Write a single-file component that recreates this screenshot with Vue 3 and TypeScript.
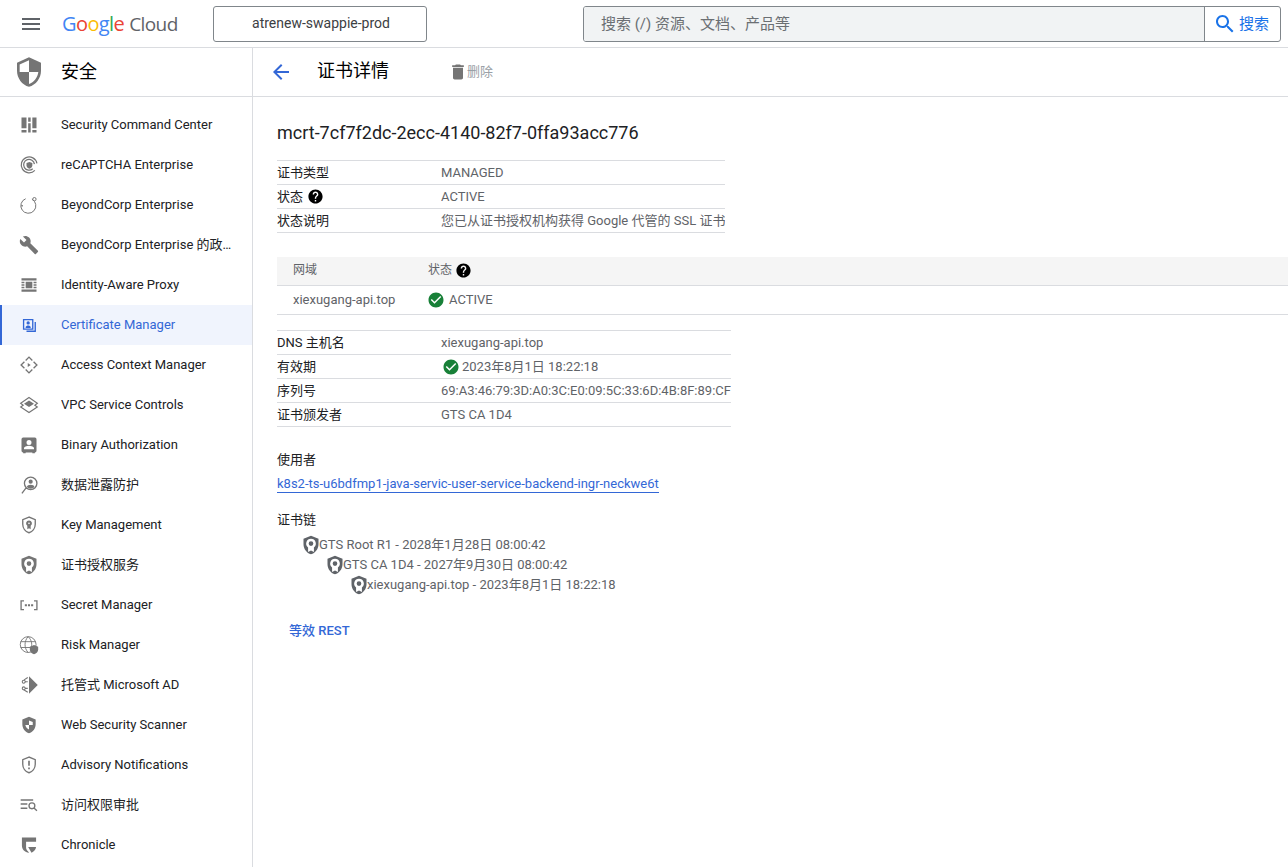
<template>
  <div class="page">
    <header class="topbar">
      <button class="menu-btn" title="菜单">
        <svg width="24" height="24" viewBox="0 0 24 24"><path fill="#5f6368" d="M3 18h18v-2H3v2zm0-5h18v-2H3v2zm0-7v2h18V6H3z" /></svg>
      </button>
      <div class="logo">
        <span class="g-blue">G</span><span class="g-red">o</span><span class="g-yellow">o</span><span class="g-blue">g</span><span class="g-green">l</span><span class="g-red">e</span><span class="logo-cloud">Cloud</span>
      </div>
      <div class="project">atrenew-swappie-prod</div>
      <div class="search">
        <div class="search-input">搜索 (/) 资源、文档、产品等</div>
        <div class="search-btn">
          <svg width="24" height="24" viewBox="0 0 24 24"><path fill="#1a73e8" :d="icons.search" /></svg>
          <span>搜索</span>
        </div>
      </div>
    </header>

    <div class="body">
      <aside class="sidebar">
        <div class="side-head">
          <svg width="32" height="32" viewBox="0 0 24 24"><path fill="#757575" d="M12 1L3 5v6c0 5.55 3.84 10.74 9 12 5.16-1.26 9-6.45 9-12V5l-9-4zm0 10.99h7c-.53 4.12-3.28 7.79-7 8.94V12H5V6.3l7-3.11v8.8z" /></svg>
          <span>安全</span>
        </div>
        <nav class="nav">
          <a v-for="item in navItems" :key="item.label" class="nav-item" :class="{ active: item.active }">
            <svg class="nav-icon" width="20" height="20" viewBox="0 0 24 24">
              <path v-if="item.s" :d="item.s" fill="none" stroke="currentColor" :stroke-width="item.w ?? 2" />
              <path v-if="item.d" :d="item.d" fill="currentColor" fill-rule="evenodd" />
            </svg>
            <span class="nav-label">{{ item.label }}</span>
          </a>
        </nav>
      </aside>

      <main class="main">
        <div class="title-bar">
          <svg class="back" width="24" height="24" viewBox="0 0 24 24"><path fill="#3367d6" d="M20 11H7.83l5.59-5.59L12 4l-8 8 8 8 1.41-1.41L7.83 13H20v-2z" /></svg>
          <h1>证书详情</h1>
          <div class="delete">
            <svg width="20" height="20" viewBox="0 0 24 24"><path fill="#757575" d="M6 19c0 1.1.9 2 2 2h8c1.1 0 2-.9 2-2V7H6v12zM19 4h-3.5l-1-1h-5l-1 1H5v2h14V4z" /></svg>
            <span>删除</span>
          </div>
        </div>

        <div class="content">
          <h2>mcrt-7cf7f2dc-2ecc-4140-82f7-0ffa93acc776</h2>

          <div class="kv kv-first">
            <div class="kv-row"><div class="k">证书类型</div><div class="v">MANAGED</div></div>
            <div class="kv-row">
              <div class="k">状态<svg class="help" width="17" height="17" viewBox="0 0 24 24"><path :d="icons.help" /></svg></div>
              <div class="v">ACTIVE</div>
            </div>
            <div class="kv-row"><div class="k">状态说明</div><div class="v">您已从证书授权机构获得 Google 代管的 SSL 证书</div></div>
          </div>

          <div class="domains">
            <div class="d-row d-head">
              <div class="d-name">网域</div>
              <div class="d-status">状态<svg class="help" width="17" height="17" viewBox="0 0 24 24"><path :d="icons.help" /></svg></div>
            </div>
            <div class="d-row">
              <div class="d-name">xiexugang-api.top</div>
              <div class="d-status">
                <svg class="ok" width="18" height="18" viewBox="0 0 24 24"><path fill="#188038" :d="icons.check" /></svg>ACTIVE
              </div>
            </div>
          </div>

          <div class="kv kv-second">
            <div class="kv-row"><div class="k">DNS 主机名</div><div class="v">xiexugang-api.top</div></div>
            <div class="kv-row">
              <div class="k">有效期</div>
              <div class="v v-date">
                <svg class="ok" width="18" height="18" viewBox="0 0 24 24"><path fill="#188038" :d="icons.check" /></svg>2023年8月1日 18:22:18
              </div>
            </div>
            <div class="kv-row"><div class="k">序列号</div><div class="v">69:A3:46:79:3D:A0:3C:E0:09:5C:33:6D:4B:8F:89:CF</div></div>
            <div class="kv-row"><div class="k">证书颁发者</div><div class="v">GTS CA 1D4</div></div>
          </div>

          <div class="section-label used-by">使用者</div>
          <a class="link">k8s2-ts-u6bdfmp1-java-servic-user-service-backend-ingr-neckwe6t</a>

          <div class="section-label chain-label">证书链</div>
          <div class="chain">
            <div v-for="(c, i) in chain" :key="c" class="chain-row" :style="{ paddingLeft: 24 * i + 'px' }">
              <svg width="20" height="20" viewBox="0 0 24 24"><path fill="#5f6368" fill-rule="evenodd" :d="icons.medal" /></svg>
              <span>{{ c }}</span>
            </div>
          </div>

          <a class="rest">等效 REST</a>
        </div>
      </main>
    </div>
  </div>
</template>

<script setup lang="ts">
interface NavItem {
  label: string
  d?: string
  s?: string
  w?: number
  active?: boolean
}

const icons = {
  search: 'M15.5 14h-.79l-.28-.27C15.41 12.59 16 11.11 16 9.5 16 5.91 13.09 3 9.5 3S3 5.91 3 9.5 5.91 16 9.5 16c1.61 0 3.09-.59 4.23-1.57l.27.28v.79l5 4.99L20.49 19l-4.99-5zm-6 0C7.01 14 5 11.99 5 9.5S7.01 5 9.5 5 14 7.01 14 9.5 11.99 14 9.5 14z',
  help: 'M12 2C6.48 2 2 6.48 2 12s4.48 10 10 10 10-4.48 10-10S17.52 2 12 2zm1 17h-2v-2h2v2zm2.07-7.75l-.9.92C13.45 12.9 13 13.5 13 15h-2v-.5c0-1.1.45-2.1 1.17-2.83l1.24-1.26c.37-.36.59-.86.59-1.41 0-1.1-.9-2-2-2s-2 .9-2 2H8c0-2.21 1.79-4 4-4s4 1.79 4 4c0 .88-.36 1.68-.93 2.25z',
  check: 'M12 2C6.48 2 2 6.48 2 12s4.48 10 10 10 10-4.48 10-10S17.52 2 12 2zm-2 15l-5-5 1.41-1.41L10 14.17l7.59-7.59L19 8l-9 9z',
  medal: 'M12 1L3 4.500V11c0 5.550 3.840 10.740 9 12 5.160-1.260 9-6.450 9-12V4.500zM12 4.500a5.800 5.800 0 0 1 3.500 10.400V20.500L12 18.500 8.500 20.500V14.900A5.800 5.800 0 0 1 12 4.500zM12 7.500a2.800 2.800 0 1 0 0 5.600 2.800 2.800 0 0 0 0-5.600z'
}

const navItems: NavItem[] = [
  { label: 'Security Command Center', d: 'M3 3h6v13H3zM3 18h6v3H3zM11 3h3v5h-3zM11 10h3v11h-3zM16 3h5v13h-5zM16 18h5v3h-5z' },
  { label: 'reCAPTCHA Enterprise', w: 1.5, s: 'M19 18.500A9.500 9.500 0 1 1 21.500 10M16.500 16.500A6.500 6.500 0 1 1 18.500 11', d: 'M12.500 8.500l3.500 1.200v2.500c0 2-1.500 3.800-3.500 4.300-2-.5-3.500-2.300-3.500-4.300V9.700z' },
  { label: 'BeyondCorp Enterprise', w: 1.2, s: 'M15.500 5A9 9 0 1 1 8 4.500M18.500 3a2 2 0 1 1 0 4 2 2 0 0 1 0-4z', d: 'M2.800 12h1.800v1.800H2.800z' },
  { label: 'BeyondCorp Enterprise 的政策', d: 'M22.7 19l-9.1-9.1c.9-2.3.4-5-1.500-6.900-2-2-5-2.400-7.400-1.300L9 6 6 9 1.600 4.700C.4 7.100.9 10.100 2.900 12.100c1.900 1.900 4.600 2.400 6.900 1.500l9.100 9.100c.4.4 1 .4 1.400 0l2.300-2.300c.5-.4.5-1.100.1-1.400z' },
  { label: 'Identity-Aware Proxy', d: 'M3 4h18v2.500H3zM3 17.500h18V20H3zM3 8h3.500v2H3zM3 14h3.500v2H3zM3 11h3.500v2H3zM17.500 8H21v2h-3.500zM17.500 14H21v2h-3.500zM17.500 11H21v2h-3.500zM8 8h8v8H8z' },
  { label: 'Certificate Manager', active: true, w: 1.6, s: 'M5.500 5.500h11v11.500h-11zM19.500 8.500v11H9', d: 'M11 7.500a2 2 0 1 1 0 4 2 2 0 0 1 0-4zM8 15.500v-1c0-1 1.800-1.800 3-1.800s3 .8 3 1.800v1z' },
  { label: 'Access Context Manager', w: 1.6, s: 'M8 6.500L12 2.500 16 6.500M16 17.500L12 21.500 8 17.500M6.500 8L2.500 12 6.500 16M17.500 8L21.500 12 17.500 16', d: 'M10.500 9.500l3.500 2.500-3.500 2.500z' },
  { label: 'VPC Service Controls', w: 1.4, s: 'M12 3l10 7-3 2.200 3 2.300-10 6.500-10-6.500 3-2.300-3-2.200z', d: 'M12 6.500l6 4-6 4-6-4z' },
  { label: 'Binary Authorization', d: 'M5 3h14a2 2 0 0 1 2 2v14a2 2 0 0 1-2 2v1h-3v-1H8v1H5v-1a2 2 0 0 1-2-2V5a2 2 0 0 1 2-2zM12 6a3 3 0 1 0 0 6 3 3 0 0 0 0-6zM6 17h12v-1.500c0-1-3-2.500-6-2.500s-6 1.500-6 2.500z' },
  { label: '数据泄露防护', w: 1.6, s: 'M14 2.500a7.500 7.500 0 1 1 0 15 7.500 7.500 0 0 1 0-15zM8.500 15.500L3.500 22', d: 'M14 5.500a2.500 2.500 0 1 1 0 5 2.500 2.500 0 0 1 0-5zM9.500 14.500c0-1.700 2.500-2.700 4.500-2.700s4.500 1 4.500 2.700a6 6 0 0 1-9 0z' },
  { label: 'Key Management', w: 1.6, s: 'M12 2.500L4.500 5.500V11c0 4.700 3.200 8.900 7.500 10.300 4.300-1.400 7.500-5.600 7.500-10.300V5.500z', d: 'M12 6.500a3.500 3.500 0 0 1 2 6.400V17l-2-1-2 1v-4.100a3.500 3.500 0 0 1 2-6.400zm0 2.500a1 1 0 1 0 0 2 1 1 0 0 0 0-2z' },
  { label: '证书授权服务', d: icons.medal },
  { label: 'Secret Manager', w: 1.6, s: 'M6 7H2.500v10.500H6M18 7h3.500v10.500H18', d: 'M7 11h2.500v2.500H7zM10.750 11h2.500v2.500h-2.500zM14.500 11H17v2.500h-2.500z' },
  { label: 'Risk Manager', w: 1.1, s: 'M11 2a9.500 9.500 0 1 1 0 19 9.500 9.500 0 0 1 0-19zM2 8h18M2 15h12M11 2c-5 5-5 14 0 19M11 2c5 5 5 10 3 14', d: 'M18 12l5 2v3.500c0 2.500-2 5-5 5.500-3-.5-5-3-5-5.500V14z' },
  { label: '托管式 Microsoft AD', w: 1.3, s: 'M7.500 8a1.800 1.800 0 1 1-3.600 0 1.800 1.800 0 0 1 3.600 0zM7.500 16a1.800 1.800 0 1 1-3.600 0 1.800 1.800 0 0 1 3.600 0zM7.500 8h3M7.500 16h3M5.700 6.200L10.500 3M5.700 17.800l4.800 3', d: 'M12 1.500L22.500 12 12 22.500z' },
  { label: 'Web Security Scanner', d: 'M12 2L4 5.300V11c0 5 3.400 9.400 8 11 4.600-1.600 8-6 8-11V5.300zM12 6.500l4.500 1.800V12H12zM12 12v5.500c-2.200-.9-3.900-3-4.400-5.500z' },
  { label: 'Advisory Notifications', w: 1.6, s: 'M12 2.500L4.500 5.500V11c0 4.700 3.200 8.900 7.500 10.300 4.300-1.400 7.500-5.600 7.500-10.300V5.500z', d: 'M11 7h2v6h-2zM11 15h2v2h-2z' },
  { label: '访问权限审批', w: 1.6, s: 'M15.500 9.500a3.500 3.500 0 1 1 0 7 3.500 3.500 0 0 1 0-7zM18 15.500l3.500 3.500', d: 'M2 5h15v1.800H2zM2 10h8v1.800H2zM2 15h8v1.800H2z' },
  { label: 'Chronicle', d: 'M3.500 3h17v5H8.500v7c0 1.800.8 3.300 2.300 4.500L12 21.500c-5-1-8.500-4-8.500-8.500zM11 14.500h9.500c-.4 3.300-2.800 5.800-5.500 6.800z' }
]

const chain = [
  'GTS Root R1 - 2028年1月28日 08:00:42',
  'GTS CA 1D4 - 2027年9月30日 08:00:42',
  'xiexugang-api.top - 2023年8月1日 18:22:18'
]
</script>

<style>
html,
body {
  margin: 0;
  height: 100%;
  overflow: hidden;
  background: #fff;
}
</style>

<style scoped>
.page {
  height: 867px;
  display: flex;
  flex-direction: column;
  overflow: hidden;
  font-family: Roboto, "Noto Sans CJK SC", sans-serif;
  font-size: 13px;
  line-height: 18px;
  color: #202124;
  background: #fff;
}

.topbar {
  height: 48px;
  box-sizing: border-box;
  border-bottom: 1px solid #dadce0;
  display: flex;
  align-items: center;
  flex-shrink: 0;
}

.menu-btn {
  width: 24px;
  height: 24px;
  margin-left: 19px;
  padding: 0;
  border: none;
  background: transparent;
}

.logo {
  width: 151px;
  margin-left: 19px;
  font-family: "Open Sans", sans-serif;
  font-size: 20px;
  line-height: 26px;
  letter-spacing: -0.6px;
  white-space: nowrap;
}

.g-blue { color: #4285f4; }
.g-red { color: #ea4335; }
.g-yellow { color: #fbbc04; }
.g-green { color: #34a853; }
.logo-cloud {
  margin-left: 5px;
  font-size: 19px;
  color: #5f6368;
}

.project {
  width: 214px;
  height: 36px;
  box-sizing: border-box;
  border: 1px solid #80868b;
  border-radius: 3px;
  padding-left: 2px;
  font-size: 14px;
  line-height: 32px;
  text-align: center;
  color: #3c4043;
}

.search {
  width: 698px;
  height: 36px;
  margin-left: 156px;
  box-sizing: border-box;
  border: 1px solid #80868b;
  border-radius: 3px;
  display: flex;
  overflow: hidden;
}

.search-input {
  flex: 1;
  padding-left: 17px;
  background: #f1f3f4;
  border-right: 1px solid #80868b;
  font-size: 15px;
  line-height: 34px;
  color: #6b6f73;
}

.search-btn {
  width: 75px;
  box-sizing: border-box;
  padding-left: 8px;
  display: flex;
  align-items: center;
  gap: 2px;
  font-size: 15px;
  color: #1a73e8;
}

.body {
  flex: 1;
  display: flex;
  min-height: 0;
}

.sidebar {
  width: 253px;
  box-sizing: border-box;
  border-right: 1px solid #dadce0;
  flex-shrink: 0;
  overflow: hidden;
}

.side-head {
  height: 49px;
  box-sizing: border-box;
  border-bottom: 1px solid #dadce0;
  display: flex;
  align-items: center;
  padding-left: 13px;
  gap: 16px;
  font-size: 18px;
  color: #000;
}

.side-head span {
  line-height: 24px;
  padding-bottom: 1px;
}

.nav {
  padding-top: 8px;
}

.nav-item {
  height: 40px;
  box-sizing: border-box;
  display: flex;
  align-items: center;
  padding-left: 19px;
  gap: 22px;
  color: #202124;
}

.nav-item.active {
  background: #f0f4fd;
  border-left: 2px solid #3367d6;
  padding-left: 17px;
  color: #3367d6;
}

.nav-icon {
  flex-shrink: 0;
  color: #757575;
}

.active .nav-icon {
  color: #3367d6;
}

.nav-label {
  width: 171px;
  padding-bottom: 1px;
  white-space: nowrap;
  overflow: hidden;
  text-overflow: ellipsis;
}

.main {
  flex: 1;
  min-width: 0;
}

.title-bar {
  height: 49px;
  box-sizing: border-box;
  border-bottom: 1px solid #dadce0;
  display: flex;
  align-items: center;
  padding-left: 16px;
}

.title-bar h1 {
  margin: 0 0 0 24px;
  padding-bottom: 2px;
  font-size: 18px;
  font-weight: 400;
  line-height: 24px;
  color: #000;
}

.delete {
  margin-left: 59px;
  display: flex;
  align-items: center;
  color: #9aa0a6;
}

.delete svg {
  margin-right: -1px;
}

.content {
  padding: 0 0 0 24px;
}

.content h2 {
  margin: 0;
  padding-top: 24px;
  height: 39px;
  font-size: 18px;
  font-weight: 400;
  line-height: 24px;
  color: #202124;
}

.kv {
  border-top: 1px solid #dadce0;
}

.kv-first {
  width: 448px;
}

.kv-second {
  width: 454px;
  margin-top: 15px;
}

.kv-row {
  height: 24px;
  box-sizing: border-box;
  border-bottom: 1px solid #dadce0;
  display: flex;
  align-items: center;
}

.k {
  width: 164px;
  flex-shrink: 0;
  display: flex;
  align-items: center;
  gap: 4px;
  color: #202124;
}

.v {
  color: #5f6368;
  white-space: nowrap;
  overflow: hidden;
}

.v-date {
  display: flex;
  align-items: center;
  height: 17px;
  line-height: 16px;
}

.v-date .ok {
  margin: 0 2px 0 1px;
}

.help {
  fill: #000;
}

.domains {
  margin-top: 24px;
}

.d-row {
  height: 29px;
  box-sizing: border-box;
  border-bottom: 1px solid #dadce0;
  display: flex;
  align-items: center;
  color: #5f6368;
}

.d-head {
  padding-bottom: 2px;
  background: #f5f5f5;
  font-size: 12px;
}

.d-head .d-status {
  margin-left: 1px;
  gap: 3px;
}

.d-name {
  width: 134px;
  padding-left: 16px;
  flex-shrink: 0;
}

.d-status {
  display: flex;
  align-items: center;
  gap: 4px;
}

.section-label {
  color: #202124;
  line-height: 20px;
}

.used-by {
  margin-top: 23px;
}

.link {
  display: inline-block;
  margin-top: 6px;
  line-height: 16px;
  color: #3367d6;
  border-bottom: 1px solid #3367d6;
}

.chain-label {
  margin-top: 17px;
}

.chain {
  margin-top: 5px;
  padding-left: 24px;
}

.chain-row {
  height: 20px;
  display: flex;
  align-items: center;
  color: #5f6368;
}

.chain-row svg {
  margin-right: -2px;
}

.rest {
  display: block;
  margin: 27px 0 0 12px;
  font-weight: 500;
  color: #3367d6;
}
</style>
